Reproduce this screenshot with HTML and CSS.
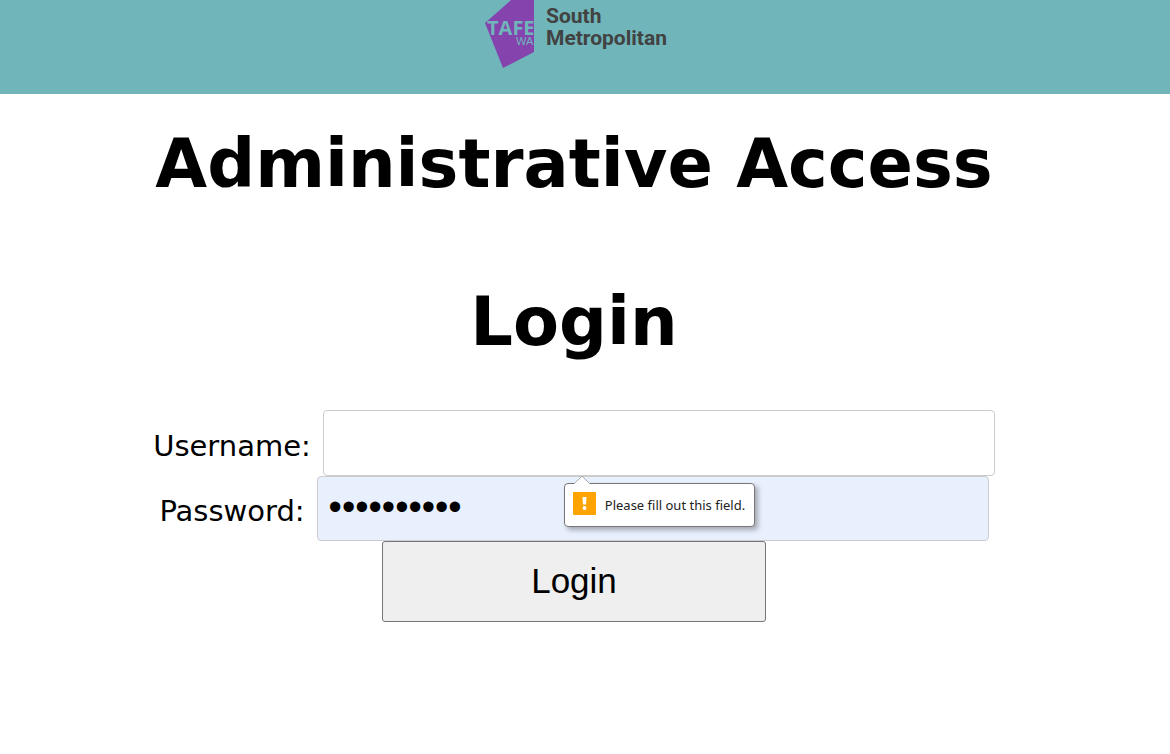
FILE: index.html
```html
<!DOCTYPE html>
<html lang="en">
<head>
<meta charset="utf-8">
<title>Administrative Access Login</title>
<meta name="viewport" content="width=device-width, initial-scale=1">
<link rel="stylesheet" href="styles.css">
</head>
<body>
<header class="banner">
  <svg class="logo" width="200" height="72" viewBox="0 0 200 72" role="img" aria-label="TAFE WA South Metropolitan">
    <path class="logo-shape" d="M0 23 26 0H49V52L18 68Z"/>
    <text class="logo-tafe" x="2" y="35">TAFE</text>
    <text class="logo-wa" x="31" y="45">WA</text>
    <text class="logo-name" x="61" y="23">South</text>
    <text class="logo-name" x="61" y="45">Metropolitan</text>
  </svg>
</header>
<main class="page">
  <h1 class="title">Administrative Access</h1>
  <h1 class="title">Login</h1>
  <form class="login">
    <div class="row">
      <label for="username">Username:</label>
      <div class="field">
        <input class="control" id="username" name="username" type="text" required>
        <div class="hint" role="alert">
          <svg class="hint-arrow" width="18" height="9" viewBox="0 0 18 9" aria-hidden="true"><path d="M1 9 9 1 17 9" fill="#fff" stroke="#aaa"/></svg>
          <svg width="23" height="23" viewBox="0 0 23 23" aria-hidden="true"><rect width="23" height="23" rx="1" fill="#ffa300"/><path d="M9.5 5H13.5L13 12.500H10Z" fill="#fff"/><circle cx="11.5" cy="16" r="1.9" fill="#fff"/></svg>
          <span class="hint-text">Please fill out this field.</span>
        </div>
      </div>
    </div>
    <div class="row">
      <label for="password">Password:</label>
      <div class="field"><input class="control filled" id="password" name="password" type="password" value="administer" required></div>
    </div>
    <button class="submit" type="submit">Login</button>
  </form>
</main>
</body>
</html>
```
FILE: styles.css
```css
* { box-sizing: border-box; }
body {
  margin: 0;
  background: #fff;
  color: #000;
  font-family: Verdana, "DejaVu Sans", sans-serif;
}
.banner {
  display: flex;
  justify-content: center;
  height: 94px;
  background: #6fb5ba;
}
.logo { display: block; }
.logo-shape { fill: #8544ad; }
.logo-tafe { fill: #6fb5ba; font: bold 20px "Open Sans", sans-serif; }
.logo-wa { fill: #6fb5ba; font: 11px "Liberation Sans", sans-serif; }
.logo-name { fill: #424242; font: bold 21px Roboto, sans-serif; }
.page { padding: 30px 22px 0 0; }
.title {
  margin: 0 0 78px;
  font-size: 67px;
  line-height: 80px;
  text-align: center;
}
.title + .title { margin-bottom: 48px; }
.login {
  display: flex;
  flex-direction: column;
  align-items: center;
  font-size: 29px;
}
.row {
  display: flex;
  justify-content: center;
  align-items: center;
  gap: 12px;
  width: 100%;
}
.row label { padding-top: 5px; }
.field { position: relative; width: 672px; }
.control {
  display: block;
  width: 100%;
  height: 66px;
  padding: 0 11px;
  border: 1px solid #ccc;
  border-radius: 4px;
  background: #fff;
  font: 38px "Liberation Sans", Arial, sans-serif;
}
.filled {
  height: 65px;
  padding-bottom: 2px;
  background: #e8effd;
}
.submit {
  width: 384px;
  height: 81px;
  padding: 0 0 2px;
  border: 1px solid #767676;
  border-radius: 3px;
  background: #efefef;
  color: #000;
  font: 35px "Liberation Sans", Arial, sans-serif;
}
.hint {
  position: absolute;
  z-index: 1;
  top: 73px;
  left: 241px;
  display: flex;
  align-items: center;
  gap: 9px;
  height: 44px;
  padding: 0 9px 4px 8px;
  border: 1px solid #777;
  border-radius: 4px;
  background: #fff;
  box-shadow: 3px 3px 5px rgba(0, 0, 0, 0.3);
  color: #222;
  font: 13px "Noto Sans", sans-serif;
  white-space: nowrap;
}
.hint-text { padding-top: 3px; }
.hint-arrow {
  position: absolute;
  top: -9px;
  left: 8px;
}
```
